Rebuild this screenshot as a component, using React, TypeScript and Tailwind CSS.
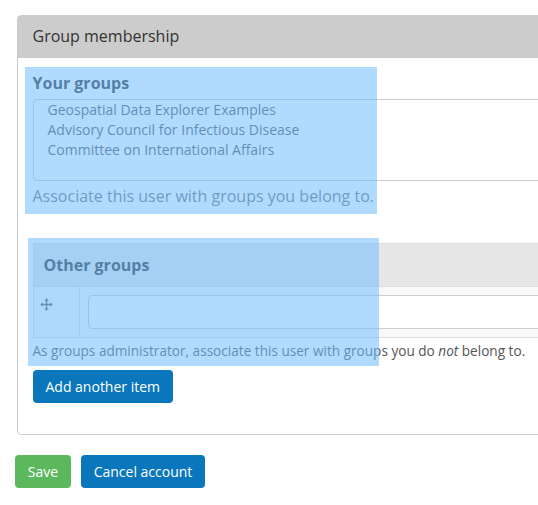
const groups = [
  "Geospatial Data Explorer Examples",
  "Advisory Council for Infectious Disease",
  "Committee on International Affairs",
];

function MoveIcon() {
  return (
    <svg width="13" height="13" viewBox="0 0 13 13" className="block" fill="none" stroke="#555" strokeWidth="1.3">
      <path d="M6.5 1v11M1 6.5h11" />
      <path d="M6.5 0.3L8.7 2.8H4.3zM6.5 12.7L8.7 10.2H4.3zM0.3 6.5L2.8 4.3v4.4zM12.7 6.5L10.2 4.3v4.4z" fill="#555" stroke="none" />
    </svg>
  );
}

export default function App() {
  return (
    <div className="h-[505px] w-[538px] overflow-hidden bg-white pt-[15px] font-['Open_Sans',sans-serif] text-[#333] antialiased">
      <section className="ml-[17px] h-[420px] w-[560px] rounded-[4px] border border-[#ccc]">
        <h2 className="h-[42px] bg-[#ccc] pl-[14.5px] text-[16px] leading-[41px]">Group membership</h2>

        <div className="relative ml-[15px] pt-[14px]">
          <div className="-ml-[0.5px] h-[22px] text-[16px] font-bold leading-[22px]">Your groups</div>
          <ul className="mt-[5px] h-[82px] rounded-[4px] border border-[#ccc] pl-[13.5px] text-[14px] leading-5 text-[#555]">
            {groups.map((g) => (
              <li key={g}>{g}</li>
            ))}
          </ul>
          <p className="-ml-[0.5px] mt-[4px] h-[23px] text-[16px] leading-[23px] text-[#737373]">
            Associate this user with groups you belong to.
          </p>
          <div className="absolute -left-2 top-[9px] h-[147px] w-[352px] bg-[#6fbdff]/55" />
        </div>

        <div className="relative ml-[15px] mt-[35px]">
          <div className="border border-[#ddd] bg-[#f9f9f9]">
            <div className="h-[43px] border-b border-[#ddd] bg-[#e6e6e6] pl-[9.5px] text-[16px] font-bold leading-[42px]">
              Other groups
            </div>
            <div className="flex h-[50px]">
              <div className="w-[46px] shrink-0 border-r border-[#ddd] pl-[6px] pt-[11px]">
                <MoveIcon />
              </div>
              <div className="min-w-0 flex-1 pl-2 pt-2">
                <input className="block h-[34px] w-full rounded-[4px] border border-[#ccc] bg-white" />
              </div>
            </div>
          </div>
          <p className="-ml-[0.5px] mt-[3px] h-5 text-[13.6px] leading-5 whitespace-nowrap text-[#555]">
            As groups administrator, associate this user with groups you do <em>not</em> belong to.
          </p>
          <div className="absolute -left-[5px] -top-[5px] h-[128px] w-[351px] bg-[#6fbdff]/55" />
        </div>

        <button className="ml-[15px] mt-[9px] block h-[33px] w-[140px] rounded-[4px] bg-[#0a77bd] pr-[0.5px] text-[14px] leading-[33px] text-white">
          Add another item
        </button>
      </section>

      <div className="ml-[15px] mt-[20px] flex gap-[10px] text-[14px] leading-[33px] text-white">
        <button className="h-[33px] w-[56px] rounded-[4px] bg-[#5cb85c]">Save</button>
        <button className="h-[33px] w-[124px] rounded-[4px] bg-[#0a77bd]">Cancel account</button>
      </div>
    </div>
  );
}
